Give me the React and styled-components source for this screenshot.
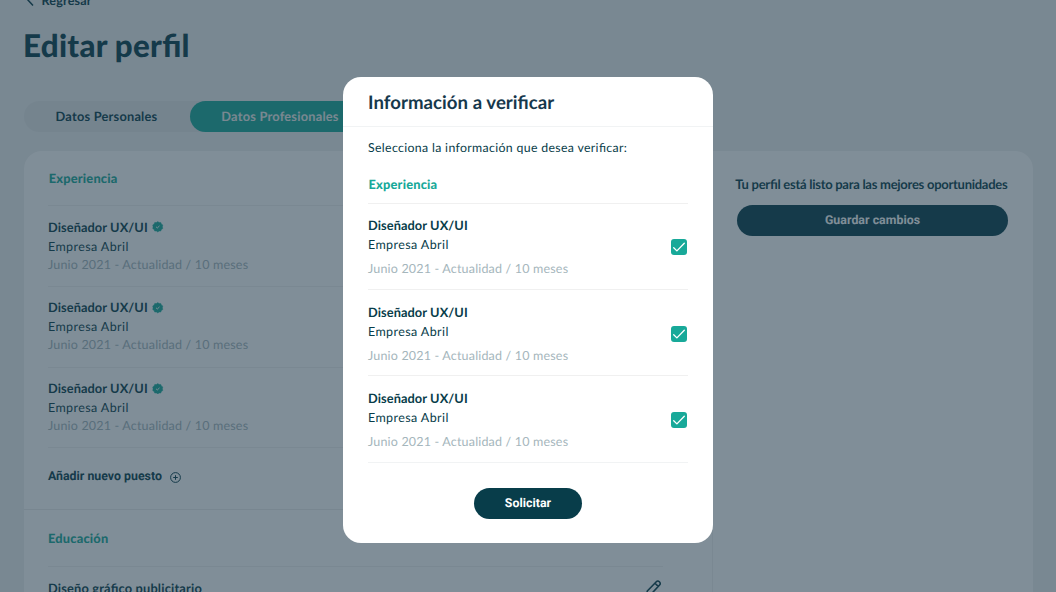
import React from "react";
import styled, { createGlobalStyle } from "styled-components";

const DARK = "#083d4a";
const TEAL = "#18a999";

const GlobalStyle = createGlobalStyle`
  * { box-sizing: border-box; }
  body {
    margin: 0;
    overflow: hidden;
    background: #eff0f0;
    font-family: Lato, "Liberation Sans", sans-serif;
    font-feature-settings: "liga" 1;
    text-rendering: geometricPrecision;
    color: ${DARK};
  }
`;

const Page = styled.main`
  height: 592px;
  overflow: hidden;
  padding: 0 23.5px;
`;

const BackLink = styled.div`
  display: flex;
  align-items: center;
  gap: 5px;
  height: 20px;
  margin-top: -10px;
  font-size: 12.6px;
  font-weight: 700;
  letter-spacing: 0.15px;
`;

const Title = styled.h1`
  margin: 13px 0 0 -0.5px;
  font-size: 31.3px;
  line-height: 44px;
  font-weight: 900;
  letter-spacing: 0.28px;
`;

const Tabs = styled.div`
  display: flex;
  width: 347px;
  height: 31px;
  margin-top: 34px;
  border-radius: 16px;
  background: #e5e7e8;
`;

const Tab = styled.div`
  display: flex;
  align-items: center;
  justify-content: center;
  width: ${(p) => (p.$active ? 181 : 166)}px;
  padding-bottom: 1.5px;
  border-radius: 16px;
  background: ${(p) => (p.$active ? TEAL : "transparent")};
  color: ${(p) => (p.$active ? "#eff0ee" : DARK)};
  font-size: 12.8px;
  font-weight: 700;
  letter-spacing: 0.22px;
`;

const Card = styled.div`
  display: flex;
  width: 1009px;
  height: 600px;
  margin-top: 19px;
  border-radius: 18px;
  background: #fff;
`;

const MainColumn = styled.div`
  flex: none;
  width: 689px;
  border-right: 1px solid #f2f2f2;
`;

const Section = styled.section`
  padding: 0 49px 0 24.5px;
  border-bottom: 1px solid #ececec;
`;

const SectionTitle = styled.h2`
  margin: 0;
  padding-top: ${(p) => p.$top}px;
  padding-left: ${(p) => p.$inset || 0}px;
  height: ${(p) => p.$height}px;
  font-size: 12.8px;
  line-height: 18px;
  font-weight: 900;
  letter-spacing: 0.2px;
  color: ${TEAL};
`;

const Job = styled.article`
  display: flex;
  justify-content: space-between;
  height: ${(p) => p.$height}px;
  padding-top: ${(p) => p.$top || 12}px;
  border-top: 1px solid #f0f0f0;
`;

const JobTitle = styled.h3`
  display: flex;
  align-items: center;
  gap: 4.5px;
  height: 19px;
  margin: 0;
  font-size: 12.8px;
  line-height: 19px;
  font-weight: 700;
  letter-spacing: ${(p) => (p.$wide ? 0.18 : 0.08)}px;
`;

const Company = styled.p`
  margin: 0;
  font-size: 12.5px;
  line-height: 19px;
  letter-spacing: 0.4px;
`;

const Dates = styled.p`
  margin: ${(p) => p.$gap || 0}px 0 0;
  font-size: 12.5px;
  line-height: 18px;
  letter-spacing: 0.18px;
  color: #a5b6bc;
`;

const AddButton = styled.div`
  display: flex;
  align-items: center;
  gap: 8px;
  height: 62px;
  padding-bottom: 3px;
  border-top: 1px solid #f0f0f0;
  font-family: Roboto, sans-serif;
  font-size: 12.35px;
  font-weight: 700;
`;

const Sidebar = styled.aside`
  flex: none;
  width: 320px;
  padding: 24px 24.5px 0 22.8px;
`;

const Ready = styled.p`
  margin: 0 0 12px;
  font-size: 13px;
  line-height: 18px;
  font-weight: 700;
  letter-spacing: -0.27px;
  white-space: nowrap;
`;

const Button = styled.button`
  display: block;
  width: ${(p) => p.$width}px;
  height: 31px;
  margin: 0 0 0 auto;
  padding: 1px 0 0;
  border: 0;
  border-radius: 16px;
  background: ${DARK};
  color: #fff;
  font-family: Roboto, sans-serif;
  font-size: 12.3px;
  font-weight: 700;
  letter-spacing: 0.05px;
  text-rendering: geometricPrecision;
`;

const Backdrop = styled.div`
  position: fixed;
  inset: 0;
  display: flex;
  justify-content: center;
  align-items: flex-start;
  padding-top: 77.3px;
  background: rgba(31, 56, 73, 0.567);
`;

const Modal = styled.div`
  width: 370px;
  height: 466px;
  border-radius: 18px;
  background: #fff;
`;

const ModalHeader = styled.h2`
  margin: 0;
  height: 49.7px;
  padding: 11.5px 25px 0;
  border-bottom: 1px solid #f1f3f4;
  font-size: 18.6px;
  line-height: 26px;
  font-weight: 700;
  letter-spacing: 0.05px;
  color: #16384c;
`;

const ModalBody = styled.div`
  padding: 11px 25px 0;
`;

const Prompt = styled.p`
  margin: 0;
  font-size: 12.3px;
  line-height: 19px;
  letter-spacing: 0.34px;
`;

const JobList = styled.div`
  margin-bottom: 25px;
  border-bottom: 1px solid #f1f3f4;
`;

const Actions = styled.div`
  display: flex;
  width: 108px;
  margin: 0 auto;
`;

const CheckIcon = styled.svg`
  margin: 23px 1.5px 0 0;
`;

const Verified = () => (
  <svg width="11.5" height="11.5" viewBox="0 0 24 24">
    <path
      fill={TEAL}
      stroke={TEAL}
      strokeLinejoin="round"
      d="M12 1.2l2.800 2 3.500-.2 1.200 3.300 3 2L21.700 12l.8 3.700-3 2-1.200 3.300-3.500-.2-2.800 2-2.800-2-3.500.2-1.200-3.300-3-2 .8-3.700-.8-3.700 3-2L5.700 3l3.500.2z"
    />
    <path d="M8.500 12.200l2.600 2.300 4.600-4.300" fill="none" stroke="#fff" strokeWidth="2" />
  </svg>
);

const Check = () => (
  <CheckIcon width="16" height="16" viewBox="0 0 16 16">
    <rect width="16" height="16" rx="3" fill={TEAL} />
    <path
      d="M2.700 8.700l3.200 3.200L13.300 4.300"
      fill="none"
      stroke="#fff"
      strokeWidth="1.3"
      strokeLinecap="round"
      strokeLinejoin="round"
    />
  </CheckIcon>
);

const jobs = [1, 2, 3].map((id) => ({
  id,
  title: "Diseñador UX/UI",
  company: "Empresa Abril",
  dates: "Junio 2021 - Actualidad / 10 meses",
}));

export default function App() {
  return (
    <>
      <GlobalStyle />
      <Page>
        <BackLink>
          <svg width="13" height="14" viewBox="0 0 13 14" fill="none" stroke={DARK} strokeWidth="1.5">
            <path d="M9 1L3.500 6.500l5.500 6" />
          </svg>
          Regresar
        </BackLink>
        <Title>Editar perfil</Title>
        <Tabs>
          <Tab>Datos Personales</Tab>
          <Tab $active>Datos Profesionales</Tab>
        </Tabs>
        <Card>
          <MainColumn>
            <Section>
              <SectionTitle $top={17.5} $height={54} $inset={0.7}>Experiencia</SectionTitle>
              {jobs.map((job) => (
                <Job key={job.id} $height={80.75} $top={11.5}>
                  <div>
                    <JobTitle>
                      {job.title}
                      <Verified />
                    </JobTitle>
                    <Company>{job.company}</Company>
                    <Dates>{job.dates}</Dates>
                  </div>
                </Job>
              ))}
              <AddButton>
                Añadir nuevo puesto
                <svg width="11" height="11" viewBox="0 0 11 11" fill="none" stroke={DARK}>
                  <circle cx="5.5" cy="5.5" r="4.9" />
                  <path d="M5.500 3.200v4.600M3.200 5.500h4.600" />
                </svg>
              </AddButton>
            </Section>
            <Section>
              <SectionTitle $top={18.5} $height={56}>Educación</SectionTitle>
              <Job $height={80}>
                <JobTitle $wide>Diseño gráfico publicitario</JobTitle>
                <svg width="18" height="18" viewBox="0 0 18 18" fill="none" stroke={DARK} strokeWidth="1.6" strokeLinejoin="round">
                  <path d="M1.500 16.500l.8-4.500L11.300 2.700a2.100 2.100 0 0 1 3 0l.3.3a2.100 2.100 0 0 1 0 3L5.800 15.500zM10 4.200l3.200 3.200" />
                </svg>
              </Job>
            </Section>
          </MainColumn>
          <Sidebar>
            <Ready>Tu perfil está listo para las mejores oportunidades</Ready>
            <Button $width={271}>Guardar cambios</Button>
          </Sidebar>
        </Card>
      </Page>
      <Backdrop>
        <Modal role="dialog">
          <ModalHeader>Información a verificar</ModalHeader>
          <ModalBody>
            <Prompt>Selecciona la información que desea verificar:</Prompt>
            <SectionTitle $top={18.5} $height={46} $inset={0.5}>Experiencia</SectionTitle>
            <JobList>
              {jobs.map((job) => (
                <Job key={job.id} $height={86.25} $top={12.3}>
                  <div>
                    <JobTitle>{job.title}</JobTitle>
                    <Company>{job.company}</Company>
                    <Dates $gap={6}>{job.dates}</Dates>
                  </div>
                  <Check />
                </Job>
              ))}
            </JobList>
            <Actions>
              <Button $width={108}>Solicitar</Button>
            </Actions>
          </ModalBody>
        </Modal>
      </Backdrop>
    </>
  );
}
